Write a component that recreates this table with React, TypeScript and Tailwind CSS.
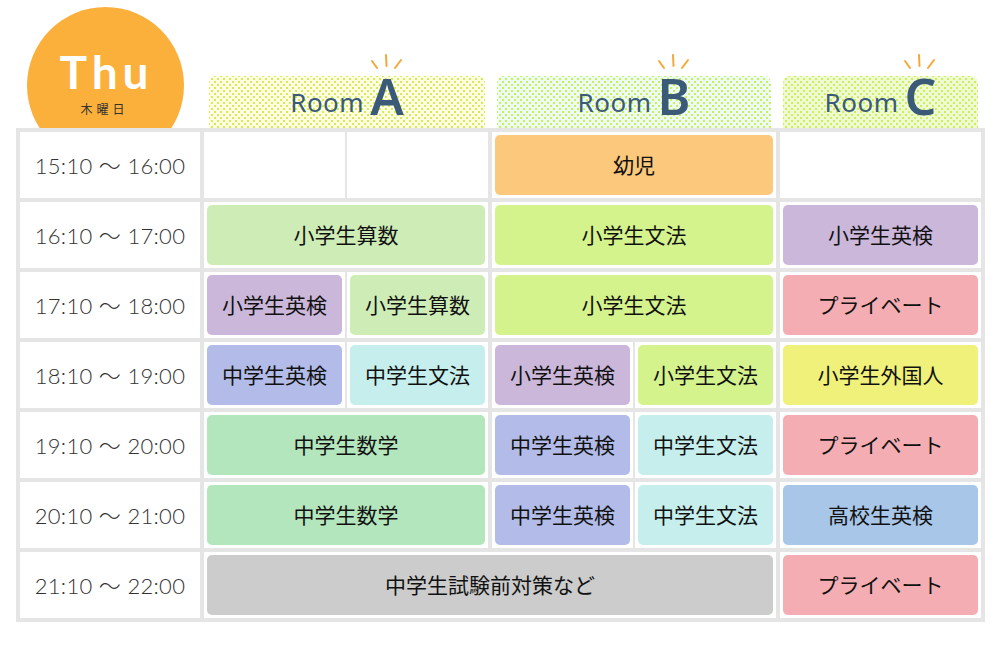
type Slot = { span: 1 | 2 | 4; edge?: boolean; label?: string; color?: string };
type Row = { time: string; slots: Slot[] };

const C = {
  orange: "bg-[#fcc87b]",
  green: "bg-[#ceecb6]",
  lime: "bg-[#d5f38d]",
  purple: "bg-[#cbb7da]",
  pink: "bg-[#f3adb3]",
  navy: "bg-[#b3bce8]",
  cyan: "bg-[#c6eeec]",
  yellow: "bg-[#eff17a]",
  mint: "bg-[#b4e6bd]",
  blue: "bg-[#a8c6e8]",
  gray: "bg-[#cccccc]",
};

const rows: Row[] = [
  {
    time: "15:10 〜 16:00",
    slots: [
      { span: 1, edge: true },
      { span: 1 },
      { span: 2, edge: true, label: "幼児", color: C.orange },
      { span: 1, edge: true },
    ],
  },
  {
    time: "16:10 〜 17:00",
    slots: [
      { span: 2, edge: true, label: "小学生算数", color: C.green },
      { span: 2, edge: true, label: "小学生文法", color: C.lime },
      { span: 1, edge: true, label: "小学生英検", color: C.purple },
    ],
  },
  {
    time: "17:10 〜 18:00",
    slots: [
      { span: 1, edge: true, label: "小学生英検", color: C.purple },
      { span: 1, label: "小学生算数", color: C.green },
      { span: 2, edge: true, label: "小学生文法", color: C.lime },
      { span: 1, edge: true, label: "プライベート", color: C.pink },
    ],
  },
  {
    time: "18:10 〜 19:00",
    slots: [
      { span: 1, edge: true, label: "中学生英検", color: C.navy },
      { span: 1, label: "中学生文法", color: C.cyan },
      { span: 1, edge: true, label: "小学生英検", color: C.purple },
      { span: 1, label: "小学生文法", color: C.lime },
      { span: 1, edge: true, label: "小学生外国人", color: C.yellow },
    ],
  },
  {
    time: "19:10 〜 20:00",
    slots: [
      { span: 2, edge: true, label: "中学生数学", color: C.mint },
      { span: 1, edge: true, label: "中学生英検", color: C.navy },
      { span: 1, label: "中学生文法", color: C.cyan },
      { span: 1, edge: true, label: "プライベート", color: C.pink },
    ],
  },
  {
    time: "20:10 〜 21:00",
    slots: [
      { span: 2, edge: true, label: "中学生数学", color: C.mint },
      { span: 1, edge: true, label: "中学生英検", color: C.navy },
      { span: 1, label: "中学生文法", color: C.cyan },
      { span: 1, edge: true, label: "高校生英検", color: C.blue },
    ],
  },
  {
    time: "21:10 〜 22:00",
    slots: [
      { span: 4, edge: true, label: "中学生試験前対策など", color: C.gray },
      { span: 1, edge: true, label: "プライベート", color: C.pink },
    ],
  },
];

const spanClass = { 1: "col-span-1", 2: "col-span-2", 4: "col-span-4" };

function Sparkle() {
  return (
    <svg
      className="absolute left-1/2 -top-[24px] -translate-x-1/2"
      width="36"
      height="18"
      viewBox="0 0 36 18"
      fill="none"
      stroke="#f5a83a"
      strokeWidth="2"
      strokeLinecap="round"
    >
      <line x1="17" y1="1" x2="17.5" y2="12" />
      <line x1="3" y1="7" x2="8" y2="14" />
      <line x1="32" y1="6" x2="26" y2="14" />
    </svg>
  );
}

function RoomHead({ letter, bg, className }: { letter: string; bg: string; className: string }) {
  return (
    <div
      className={`${className} ${bg} h-[52px] rounded-t-[7px] flex items-end justify-center pb-[13px] [background-image:radial-gradient(circle,#d3ed55_1.2px,transparent_1.6px),radial-gradient(circle,#d3ed55_1.2px,transparent_1.6px)] [background-size:6px_6px] [background-position:0_0,3px_3px]`}
    >
      <span className="text-[26px] leading-none text-[#3b5a78] tracking-[0.5px] font-['Noto_Sans',sans-serif]">
        Room
      </span>
      <span className="relative ml-[6px] text-[50px] leading-[0.72] font-semibold text-[#3b5a78] font-['Noto_Sans',sans-serif] mb-[1px]">
        {letter}
        <Sparkle />
      </span>
    </div>
  );
}

export default function App() {
  return (
    <div className="w-[997px] h-[650px] bg-white pl-4 font-['Noto_Sans_CJK_JP',sans-serif]">
      <div className="w-[969px]">
        {/* header */}
        <div className="relative flex h-[128px] items-end">
          <div className="absolute left-[11px] top-[7px] w-[157px] h-[157px] rounded-full bg-[#fbb03b] flex flex-col items-center pt-[42px]">
            <span className="text-[46px] leading-none font-bold text-white tracking-[5px] font-['Lato',sans-serif] -mr-[2px]">
              Thu
            </span>
            <span className="mt-[8px] text-[12px] leading-none text-[#333] tracking-[4px] -ml-[2px]">
              木曜日
            </span>
          </div>
          <RoomHead letter="A" bg="bg-[#fefee6]" className="ml-[193px] w-[276px]" />
          <RoomHead letter="B" bg="bg-[#ebfdf9]" className="ml-[12px] w-[274px]" />
          <RoomHead letter="C" bg="bg-[#edfbd8]" className="ml-[12px] w-[195px]" />
        </div>

        {/* timetable */}
        <div className="relative z-10 bg-[#e5e5e5] p-1 grid grid-cols-[180px_143px_141px_143px_141px_203px] gap-x-[2px] gap-y-1">
          {rows.map((row) => (
            <div key={row.time} className="contents">
              <div className="h-[66px] bg-white flex items-center justify-center text-[22px] font-light text-[#333] tracking-[0.3px] font-['Lato','Noto_Sans_CJK_JP',sans-serif]">
                {row.time}
              </div>
              {row.slots.map((s, i) => (
                <div
                  key={i}
                  className={`${spanClass[s.span]} h-[66px] bg-white p-[3px] ${s.edge ? "border-l-2 border-[#e5e5e5]" : ""}`}
                >
                  {s.label && (
                    <div
                      className={`${s.color} h-full rounded-[5px] flex items-center justify-center text-[21px] text-[#111]`}
                    >
                      {s.label}
                    </div>
                  )}
                </div>
              ))}
            </div>
          ))}
        </div>
      </div>
    </div>
  );
}
